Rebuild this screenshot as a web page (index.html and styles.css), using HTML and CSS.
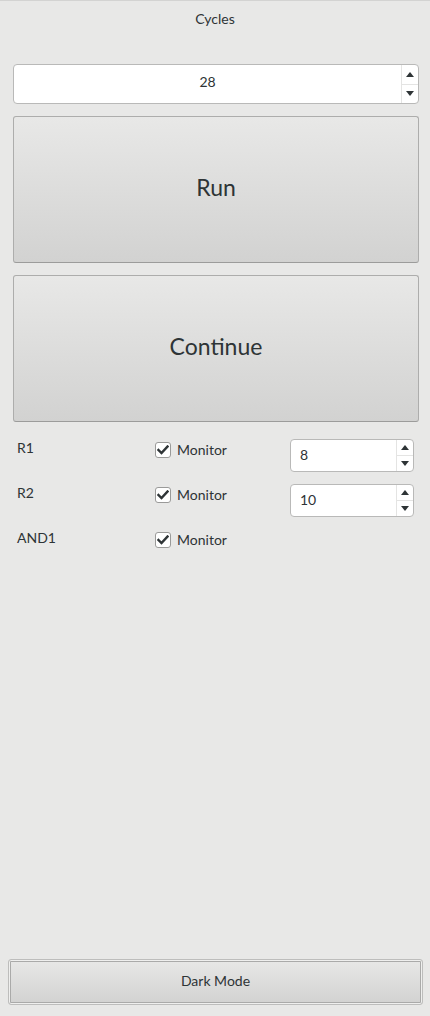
FILE: index.html
```html
<!DOCTYPE html>
<html>
<head>
<meta charset="utf-8">
<link rel="stylesheet" href="styles.css">
</head>
<body>
<div class="app">
  <div class="title">Cycles</div>
  <div class="spin spin-main">
    <div class="spin-value center">28</div>
    <div class="spin-arrows">
      <div class="arrow"><svg width="8" height="5" viewBox="0 0 8 5"><path d="M0 5 L4 0 L8 5 Z" fill="#2e3436"/></svg></div>
      <div class="arrow"><svg width="8" height="5" viewBox="0 0 8 5"><path d="M0 0 L4 5 L8 0 Z" fill="#2e3436"/></svg></div>
    </div>
  </div>
  <button class="btn big">Run</button>
  <button class="btn big">Continue</button>

  <div class="rows">
    <div class="row">
      <div class="name">R1</div>
      <label class="check"><span class="box"><svg width="12" height="10" viewBox="0 0 12 10"><path d="M1.5 5 L4.5 8 L10.5 1.5" fill="none" stroke="#2e3436" stroke-width="2.4" stroke-linecap="square"/></svg></span>Monitor</label>
      <div class="spin spin-small">
        <div class="spin-value">8</div>
        <div class="spin-arrows">
          <div class="arrow"><svg width="8" height="5" viewBox="0 0 8 5"><path d="M0 5 L4 0 L8 5 Z" fill="#2e3436"/></svg></div>
          <div class="arrow"><svg width="8" height="5" viewBox="0 0 8 5"><path d="M0 0 L4 5 L8 0 Z" fill="#2e3436"/></svg></div>
        </div>
      </div>
    </div>
    <div class="row">
      <div class="name">R2</div>
      <label class="check"><span class="box"><svg width="12" height="10" viewBox="0 0 12 10"><path d="M1.5 5 L4.5 8 L10.5 1.5" fill="none" stroke="#2e3436" stroke-width="2.4" stroke-linecap="square"/></svg></span>Monitor</label>
      <div class="spin spin-small">
        <div class="spin-value">10</div>
        <div class="spin-arrows">
          <div class="arrow"><svg width="8" height="5" viewBox="0 0 8 5"><path d="M0 5 L4 0 L8 5 Z" fill="#2e3436"/></svg></div>
          <div class="arrow"><svg width="8" height="5" viewBox="0 0 8 5"><path d="M0 0 L4 5 L8 0 Z" fill="#2e3436"/></svg></div>
        </div>
      </div>
    </div>
    <div class="row">
      <div class="name">AND1</div>
      <label class="check"><span class="box"><svg width="12" height="10" viewBox="0 0 12 10"><path d="M1.5 5 L4.5 8 L10.5 1.5" fill="none" stroke="#2e3436" stroke-width="2.4" stroke-linecap="square"/></svg></span>Monitor</label>
    </div>
  </div>

  <div class="spacer"></div>
  <button class="btn dark">Dark Mode</button>
</div>
</body>
</html>
```
FILE: styles.css
```css
html, body {
  margin: 0;
  padding: 0;
  background: #e8e8e7;
}
body {
  font-family: Lato, "Open Sans", sans-serif;
  font-size: 14px;
  color: #2e3436;
}
.app {
  height: 1016px;
  box-sizing: border-box;
  border-top: 1px solid #d3d3d2;
  display: flex;
  flex-direction: column;
}
.title {
  text-align: center;
  line-height: 17px;
  margin-top: 9px;
  margin-bottom: 37px;
}
.spin {
  display: flex;
  background: #fff;
  border: 1px solid #b9b9b8;
  border-radius: 4px;
  box-sizing: border-box;
  overflow: hidden;
}
.spin-main {
  height: 40px;
  margin: 0 11px 0 13px;
}
.spin-value {
  flex: 1;
  display: flex;
  align-items: center;
  padding-left: 9px;
  padding-bottom: 2px;
}
.spin-value.center {
  justify-content: center;
  padding-left: 0;
  padding-bottom: 5px;
}
.spin-arrows {
  width: 16px;
  display: flex;
  flex-direction: column;
  border-left: 1px solid #e4e4e3;
}
.arrow {
  flex: 1;
  display: flex;
  align-items: center;
  justify-content: center;
}
.arrow + .arrow {
  border-top: 1px solid #e4e4e3;
}
.btn {
  font-family: inherit;
  color: #2e3436;
  background: linear-gradient(#e8e8e7, #d2d2d1);
  border: 1px solid #adadac;
  border-bottom-color: #9c9c9b;
  border-radius: 3px;
  padding: 0;
  box-sizing: border-box;
}
.big {
  height: 147px;
  margin: 12px 11px 0 13px;
  font-size: 23px;
  padding-bottom: 5px;
}
.rows {
  margin: 17px 0 0 17px;
  display: flex;
  flex-direction: column;
}
.row {
  display: flex;
  align-items: flex-start;
  height: 45px;
}
.name {
  width: 138px;
  line-height: 17px;
  margin-top: 0;
}
.check {
  display: flex;
  align-items: center;
  width: 135px;
  margin-top: 3px;
  line-height: 16px;
}
.box {
  width: 16px;
  height: 16px;
  box-sizing: border-box;
  border: 1px solid #9a9a99;
  border-radius: 3px;
  background: #fff;
  display: flex;
  align-items: center;
  justify-content: center;
  margin-right: 6px;
}
.spin-small {
  width: 124px;
  height: 33px;
}
.spacer {
  flex: 1;
}
.dark {
  height: 46px;
  margin: 0 7px 11px 8px;
  font-size: 14px;
  padding-bottom: 3px;
  border-color: #bdbdbc;
  box-shadow: inset 0 0 0 1px #efefee, inset 0 0 0 2px #aaaaa9;
}
```
